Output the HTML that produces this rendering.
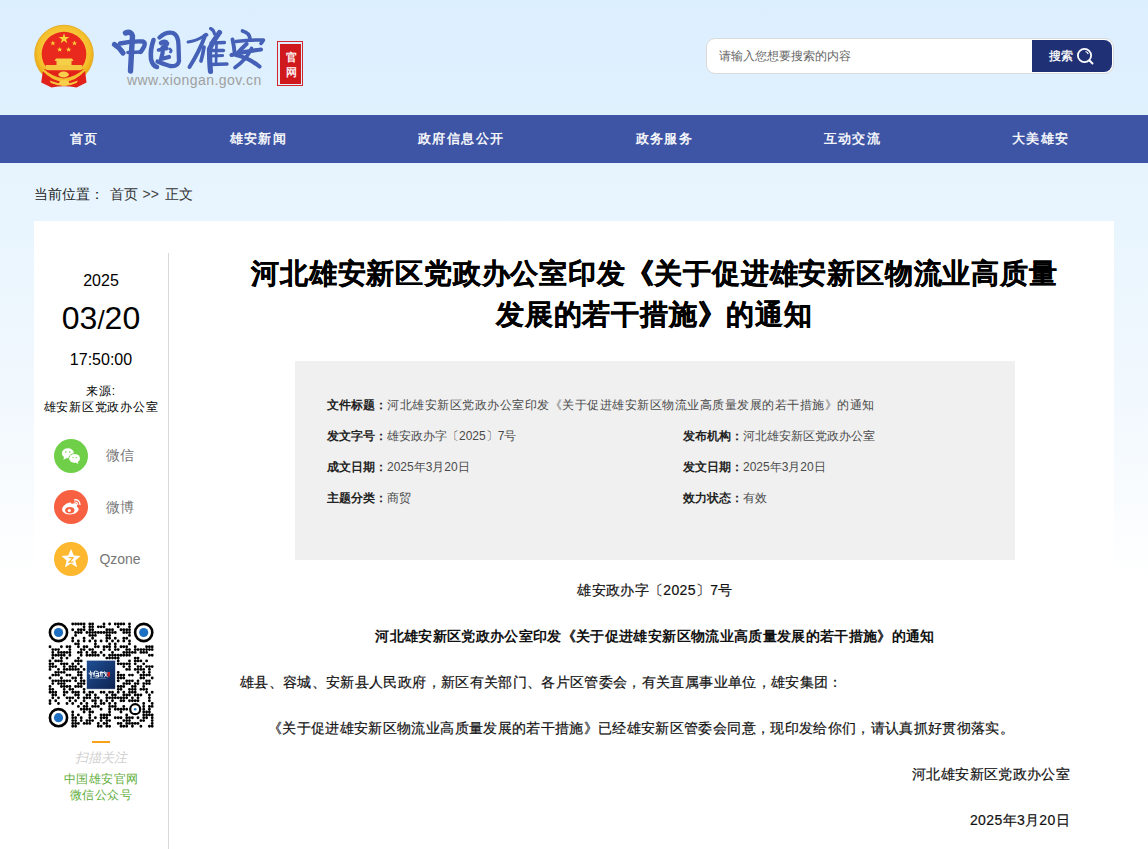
<!DOCTYPE html>
<html><head><meta charset="utf-8">
<style>
html,body{margin:0;padding:0;}
body{width:1148px;height:849px;overflow:hidden;position:relative;font-family:"Liberation Sans",sans-serif;color:#333;
background:linear-gradient(to bottom,#dcefff 0px,#e0f1fe 115px,#e6f4fe 165px,#f3f9fe 420px,#ffffff 580px,#ffffff 849px);}
.abs{position:absolute;white-space:nowrap;}
#nav{position:absolute;left:0;top:115px;width:1148px;height:48px;background:#3e55a6;}
#nav .it{position:absolute;top:0;line-height:48px;font-size:13px;color:#fff;letter-spacing:1.4px;-webkit-text-stroke:0.4px #fff;}
#bc{left:34px;top:186px;font-size:14px;line-height:16px;color:#222;}
#main{position:absolute;left:34px;top:221px;width:1080px;height:640px;background:#fff;}
#vline{position:absolute;left:168px;top:253px;width:1px;height:600px;background:#d9d9d9;}
.ctr{position:absolute;text-align:center;white-space:nowrap;}
.share{position:absolute;left:54px;width:34px;height:34px;border-radius:50%;}
.stxt{position:absolute;left:95px;width:50px;text-align:center;font-size:14px;line-height:16px;color:#777;}
#title{position:absolute;left:200px;width:909px;top:253px;text-align:center;font-size:28px;line-height:41px;font-weight:bold;color:#000;letter-spacing:0.8px;-webkit-text-stroke:0.3px #000;}
#info{position:absolute;left:295px;top:361px;width:720px;height:199px;background:#f0f0f0;}
.lab{position:absolute;font-size:12px;line-height:14px;color:#333;white-space:nowrap;}
.lab{color:#4a4a4a;} .lab b{color:#222;}
.p{position:absolute;left:240px;width:830px;font-size:14px;line-height:16px;color:#111;white-space:nowrap;letter-spacing:0.35px;-webkit-text-stroke:0.2px #111;}
</style></head>
<body>
<!-- header logo -->
<svg class="abs" style="left:30px;top:20px" width="70" height="72" viewBox="0 0 70 72">
  <defs>
    <radialGradient id="gold" cx="50%" cy="45%" r="55%"><stop offset="0" stop-color="#ffe07a"/><stop offset="0.8" stop-color="#f4bf2a"/><stop offset="1" stop-color="#e6a612"/></radialGradient>
  </defs>
  <circle cx="34" cy="34.5" r="29.3" fill="url(#gold)" stroke="#e3a51a" stroke-width="0.8"/>
  <circle cx="34" cy="34" r="22.3" fill="#e9291d"/>
  <polygon points="34,13.2 35.3,17 39.3,17 36.1,19.4 37.3,23.2 34,20.8 30.7,23.2 31.9,19.4 28.7,17 32.7,17" fill="#f8d23a"/>
  <polygon points="22.9,20.6 23.6,22.4 25.5,22.4 24,23.6 24.6,25.4 22.9,24.3 21.2,25.4 21.8,23.6 20.3,22.4 22.2,22.4" fill="#f8d23a"/>
  <polygon points="44.5,20.6 45.2,22.4 47.1,22.4 45.6,23.6 46.2,25.4 44.5,24.3 42.8,25.4 43.4,23.6 41.9,22.4 43.8,22.4" fill="#f8d23a"/>
  <polygon points="29.7,27 30.4,28.8 32.3,28.8 30.8,30 31.4,31.8 29.7,30.7 28,31.8 28.6,30 27.1,28.8 29,28.8" fill="#f8d23a"/>
  <polygon points="38.6,27 39.3,28.8 41.2,28.8 39.7,30 40.3,31.8 38.6,30.7 36.9,31.8 37.5,30 36,28.8 37.9,28.8" fill="#f8d23a"/>
  <path d="M26 38.5 L42 38.5 L43.5 41 L41.5 41 L41.5 45 L26.5 45 L26.5 41 L24.5 41 Z" fill="#f6cf48"/>
  <rect x="15.7" y="45" width="36.5" height="5.2" fill="#f4c640"/>
  <path d="M13.3 48.5 Q20 52 34 52 Q48 52 54.8 48.5 L56.5 62.5 L46.5 67.5 Q34 65 21.5 67.5 L11.2 62.5 Z" fill="#e2221a"/>
  <path d="M12.2 47.5 Q22 57 33.5 58.5 Q46 57 55.5 47.5 L55 51 Q46 61 34 62 Q22 61 12.6 51 Z" fill="#f4bf30"/>
  <path d="M19.5 60.5 Q27 63.5 34 63.5 Q41 63.5 48 60.5 L46.5 63 Q40 66 34 66 Q28 66 21 63 Z" fill="#f6c93c"/>
  <ellipse cx="33.6" cy="54.5" rx="5.2" ry="3" fill="#f7cf4a"/>
  <ellipse cx="34.2" cy="62.8" rx="5" ry="2.8" fill="#f7cf4a"/>
</svg>
<!--CALLI--><svg class="abs" style="left:108px;top:24px" width="162" height="52" viewBox="108 24 162 52" fill="none" stroke="#4560b7" stroke-linecap="round" stroke-linejoin="round">
  <!-- 中 -->
  <path d="M114.5 44.5 Q119 47 123 53" stroke-width="5.2"/>
  <path d="M120 43.5 Q132 41 143 41.5 Q146.5 43 143 48.5 Q141.5 51 140.5 52" stroke-width="4.4"/>
  <path d="M128 52.5 L141 52" stroke-width="3.6"/>
  <path d="M125.5 33 Q131 30.5 132.5 36 Q131.5 52 130.5 71" stroke-width="5.4"/>
  <!-- 国 -->
  <path d="M153.5 40 Q150 50 151 59 Q152.5 66 157 67" stroke-width="4.6"/>
  <path d="M159.5 37.5 Q166 31.5 173 33 Q178.5 35.5 178.5 45 L179 61 Q178 67 170 66 Q162 63.5 157.5 61.5" stroke-width="4.3"/>
  <path d="M161 43 Q165.5 40.5 167 43.5 Q165 47 162 49" stroke-width="4.6"/>
  <path d="M158.5 50 L167 48.5" stroke-width="3.6"/>
  <path d="M163 47 Q163 54 161 59 L169 57" stroke-width="4.2"/>
  <path d="M170 49 Q172 50.5 170.5 52" stroke-width="2.8"/>
  <!-- 雄 -->
  <path d="M188 42 Q196 41 203 36.5 Q206 33 207 35" stroke-width="2.9"/>
  <path d="M205 36 Q199 52 189.5 67" stroke-width="3.9"/>
  <path d="M204 47 Q203 54 201 61" stroke-width="3.7"/>
  <path d="M210.5 28.5 Q214 30 214.5 34" stroke-width="3.1"/>
  <path d="M219.5 32.5 Q213 41 209.5 49 Q209.5 62 210.5 71.5" stroke-width="5.2"/>
  <path d="M211 43 L224.5 42.5" stroke-width="3.3"/>
  <path d="M211 50.5 L223.5 50.5" stroke-width="3.3"/>
  <path d="M211 56 L222.5 55.5" stroke-width="3.1"/>
  <path d="M211 64.5 L227 64" stroke-width="3.5"/>
  <path d="M216.5 43 L216 64" stroke-width="2.7"/>
  <!-- 安 -->
  <path d="M242.5 31 Q249.5 33 250 38.5" stroke-width="3.7"/>
  <path d="M232.5 39.5 Q234 46 234.5 52" stroke-width="3.9"/>
  <path d="M236 41.5 Q250 39.5 263.5 40 Q262.5 42 261 43.5" stroke-width="3.5"/>
  <path d="M246.5 44 Q241 49 236 55 Q249 58 259.5 66.5" stroke-width="4.1"/>
  <path d="M231.5 55 Q246 51 261 49.5" stroke-width="4.1"/>
  <path d="M251.5 48.5 Q246 60 235 67.5" stroke-width="3.7"/>
</svg>
<!--/CALLI-->
<div class="abs" style="left:127px;top:72px;font-size:14px;line-height:17px;color:#a0a0a0;letter-spacing:0.45px;">www.xiongan.gov.cn</div>
<div class="abs" style="left:277px;top:41px;width:24px;height:43px;border:1px solid #d4262a;"></div>
<div class="abs" style="left:280px;top:44px;width:21px;height:40px;background:#d0191d;"></div>
<div class="abs" style="left:285.5px;top:50px;font-size:11px;line-height:15px;color:#fff;width:12px;white-space:normal;-webkit-text-stroke:0.3px #fff;">官网</div>

<!-- search -->
<div class="abs" style="left:706px;top:38px;width:406px;height:34px;border:1px solid #dadada;border-radius:9px;background:#fff;"></div>
<div class="abs" style="left:719px;top:48px;font-size:12px;line-height:16px;color:#666;">请输入您想要搜索的内容</div>
<div class="abs" style="left:1032px;top:40px;width:80px;height:32px;background:#1f3075;border-radius:0 8px 8px 0;"></div>
<div class="abs" style="left:1049px;top:48px;font-size:12px;line-height:16px;color:#fff;-webkit-text-stroke:0.3px #fff;">搜索</div>
<svg class="abs" style="left:1075px;top:46px" width="20" height="20" viewBox="0 0 20 20">
  <circle cx="9.5" cy="9.5" r="6.6" fill="none" stroke="#fff" stroke-width="1.8"/>
  <path d="M14.5 14.5 L17.5 17.5" stroke="#fff" stroke-width="2" stroke-linecap="round"/>
  <path d="M10.5 5.5 Q12.5 6 13.3 8" fill="none" stroke="#fff" stroke-width="1.2"/>
</svg>

<!-- nav -->
<div id="nav">
  <div class="it" style="left:70px">首页</div>
  <div class="it" style="left:229.5px">雄安新闻</div>
  <div class="it" style="left:418px">政府信息公开</div>
  <div class="it" style="left:635.5px">政务服务</div>
  <div class="it" style="left:823.5px">互动交流</div>
  <div class="it" style="left:1012px">大美雄安</div>
</div>

<div id="bc" class="abs">当前位置：</div><div class="abs" style="left:110px;top:186px;font-size:14px;line-height:16px;color:#333;">首页</div><div class="abs" style="left:142.5px;top:186px;font-size:14px;line-height:16px;color:#444;">&gt;&gt;</div><div class="abs" style="left:165px;top:186px;font-size:14px;line-height:16px;color:#333;">正文</div>

<div id="main"></div>
<div id="vline"></div>

<!-- sidebar -->
<div class="ctr" style="left:51px;width:100px;top:272px;font-size:16px;line-height:18px;color:#000;">2025</div>
<div class="ctr" style="left:51px;width:100px;top:300px;font-size:32px;line-height:36px;color:#000;">03<span style="font-size:26px">/</span>20</div>
<div class="ctr" style="left:51px;width:100px;top:351px;font-size:16px;line-height:18px;color:#000;">17:50:00</div>
<div class="ctr" style="left:41px;width:120px;top:384px;font-size:12px;line-height:15.6px;color:#000;letter-spacing:0.75px;">来源:<br>雄安新区党政办公室</div>

<svg class="abs" style="left:54px;top:439px" width="34" height="34" viewBox="0 0 34 34">
  <circle cx="17" cy="17" r="17" fill="#6fcf49"/>
  <ellipse cx="13.9" cy="14.3" rx="6" ry="5" fill="#fff"/>
  <path d="M10 17.5 L9.4 20.7 L13 18.9 Z" fill="#fff"/>
  <ellipse cx="20.6" cy="19.4" rx="6.2" ry="5.1" fill="#6fcf49"/>
  <ellipse cx="20.6" cy="19.4" rx="5.4" ry="4.4" fill="#fff"/>
  <path d="M23.4 22.5 L24.4 25 L21.4 23.5 Z" fill="#fff"/>
  <circle cx="11.8" cy="13" r="0.8" fill="#6fcf49"/>
  <circle cx="15.8" cy="13" r="0.8" fill="#6fcf49"/>
  <circle cx="19" cy="18.6" r="0.7" fill="#6fcf49"/>
  <circle cx="22.3" cy="18.6" r="0.7" fill="#6fcf49"/>
</svg>
<svg class="abs" style="left:54px;top:490px" width="34" height="34" viewBox="0 0 34 34">
  <circle cx="17" cy="17" r="17" fill="#f76142"/>
  <path d="M15.5 12.5 Q12 13 9.5 16 Q7 19.5 9 22 Q11.5 24.8 16.5 24.5 Q22 24 24 21 Q25.5 18.5 23.5 17.3 Q22.5 16.8 23 15.8 Q23.5 13.5 21.5 13.2 Q19.8 13 17.5 14 Q17.8 12.3 15.5 12.5 Z" fill="#fff"/>
  <ellipse cx="15.8" cy="20.3" rx="4.6" ry="3.2" fill="#f76142"/>
  <circle cx="15.3" cy="20.5" r="1.6" fill="#fff"/>
  <path d="M20.5 9.8 Q25.5 9.2 26 14.5" fill="none" stroke="#fff" stroke-width="1.3" stroke-linecap="round"/>
  <path d="M20.7 12 Q23.5 11.8 23.8 14.5" fill="none" stroke="#fff" stroke-width="1.1" stroke-linecap="round"/>
</svg>
<svg class="abs" style="left:54px;top:542px" width="34" height="34" viewBox="0 0 34 34">
  <circle cx="17" cy="17" r="17" fill="#fdb830"/>
  <polygon points="17,7 19.8,13.6 26.5,14.1 21.4,18.4 23,25.2 17,21.6 11,25.2 12.6,18.4 7.5,14.1 14.2,13.6" fill="#fff"/>
  <path d="M14.6 15.6 L19.4 15.6 L14.8 20.2 L19.6 20.2" fill="none" stroke="#fdb830" stroke-width="1.3" stroke-linejoin="round"/>
</svg>
<div class="stxt" style="top:447px;">微信</div>
<div class="stxt" style="top:499px;">微博</div>
<div class="stxt" style="top:551px;">Qzone</div>

<!-- QR placeholder -->
<!--QR--><svg class="abs" style="left:44px;top:618px" width="116" height="116" viewBox="44 618 116 116">
<path d="M72.7 624.0h0M75.6 624.0h0M78.4 624.0h0M81.2 624.0h0M84.1 624.0h0M89.8 624.0h0M92.6 624.0h0M104.0 624.0h0M109.6 624.0h0M115.3 624.0h0M118.2 624.0h0M121.0 624.0h0M123.8 624.0h0M129.5 624.0h0M84.1 626.8h0M89.8 626.8h0M92.6 626.8h0M98.3 626.8h0M101.1 626.8h0M104.0 626.8h0M118.2 626.8h0M129.5 626.8h0M72.7 629.7h0M78.4 629.7h0M81.2 629.7h0M84.1 629.7h0M89.8 629.7h0M92.6 629.7h0M106.8 629.7h0M109.6 629.7h0M112.5 629.7h0M121.0 629.7h0M123.8 629.7h0M126.7 629.7h0M129.5 629.7h0M75.6 632.5h0M78.4 632.5h0M81.2 632.5h0M86.9 632.5h0M89.8 632.5h0M92.6 632.5h0M95.4 632.5h0M98.3 632.5h0M101.1 632.5h0M104.0 632.5h0M106.8 632.5h0M109.6 632.5h0M112.5 632.5h0M115.3 632.5h0M123.8 632.5h0M126.7 632.5h0M129.5 632.5h0M75.6 635.4h0M89.8 635.4h0M92.6 635.4h0M95.4 635.4h0M106.8 635.4h0M109.6 635.4h0M129.5 635.4h0M72.7 638.2h0M84.1 638.2h0M92.6 638.2h0M106.8 638.2h0M109.6 638.2h0M115.3 638.2h0M123.8 638.2h0M126.7 638.2h0M72.7 641.0h0M78.4 641.0h0M84.1 641.0h0M89.8 641.0h0M95.4 641.0h0M101.1 641.0h0M106.8 641.0h0M112.5 641.0h0M118.2 641.0h0M123.8 641.0h0M129.5 641.0h0M75.6 643.9h0M78.4 643.9h0M95.4 643.9h0M109.6 643.9h0M115.3 643.9h0M129.5 643.9h0M50.0 646.7h0M61.4 646.7h0M67.0 646.7h0M69.9 646.7h0M78.4 646.7h0M84.1 646.7h0M86.9 646.7h0M95.4 646.7h0M98.3 646.7h0M104.0 646.7h0M106.8 646.7h0M109.6 646.7h0M115.3 646.7h0M121.0 646.7h0M123.8 646.7h0M126.7 646.7h0M135.2 646.7h0M146.6 646.7h0M149.4 646.7h0M152.2 646.7h0M52.8 649.6h0M55.7 649.6h0M58.5 649.6h0M69.9 649.6h0M81.2 649.6h0M84.1 649.6h0M89.8 649.6h0M92.6 649.6h0M104.0 649.6h0M109.6 649.6h0M115.3 649.6h0M118.2 649.6h0M126.7 649.6h0M129.5 649.6h0M135.2 649.6h0M138.0 649.6h0M140.9 649.6h0M143.7 649.6h0M146.6 649.6h0M149.4 649.6h0M152.2 649.6h0M52.8 652.4h0M58.5 652.4h0M61.4 652.4h0M64.2 652.4h0M67.0 652.4h0M69.9 652.4h0M78.4 652.4h0M81.2 652.4h0M86.9 652.4h0M92.6 652.4h0M95.4 652.4h0M101.1 652.4h0M112.5 652.4h0M123.8 652.4h0M126.7 652.4h0M129.5 652.4h0M132.4 652.4h0M135.2 652.4h0M140.9 652.4h0M143.7 652.4h0M146.6 652.4h0M52.8 655.2h0M55.7 655.2h0M58.5 655.2h0M61.4 655.2h0M64.2 655.2h0M69.9 655.2h0M81.2 655.2h0M86.9 655.2h0M89.8 655.2h0M92.6 655.2h0M95.4 655.2h0M98.3 655.2h0M104.0 655.2h0M109.6 655.2h0M112.5 655.2h0M115.3 655.2h0M118.2 655.2h0M121.0 655.2h0M123.8 655.2h0M126.7 655.2h0M129.5 655.2h0M149.4 655.2h0M152.2 655.2h0M52.8 658.1h0M61.4 658.1h0M67.0 658.1h0M78.4 658.1h0M106.8 658.1h0M109.6 658.1h0M112.5 658.1h0M115.3 658.1h0M118.2 658.1h0M135.2 658.1h0M138.0 658.1h0M50.0 660.9h0M55.7 660.9h0M58.5 660.9h0M61.4 660.9h0M75.6 660.9h0M78.4 660.9h0M81.2 660.9h0M118.2 660.9h0M129.5 660.9h0M135.2 660.9h0M138.0 660.9h0M140.9 660.9h0M146.6 660.9h0M50.0 663.8h0M52.8 663.8h0M61.4 663.8h0M64.2 663.8h0M67.0 663.8h0M72.7 663.8h0M78.4 663.8h0M118.2 663.8h0M121.0 663.8h0M123.8 663.8h0M126.7 663.8h0M129.5 663.8h0M135.2 663.8h0M143.7 663.8h0M50.0 666.6h0M52.8 666.6h0M55.7 666.6h0M64.2 666.6h0M69.9 666.6h0M72.7 666.6h0M75.6 666.6h0M81.2 666.6h0M123.8 666.6h0M129.5 666.6h0M138.0 666.6h0M140.9 666.6h0M146.6 666.6h0M149.4 666.6h0M152.2 666.6h0M50.0 669.4h0M58.5 669.4h0M64.2 669.4h0M67.0 669.4h0M69.9 669.4h0M72.7 669.4h0M75.6 669.4h0M78.4 669.4h0M84.1 669.4h0M126.7 669.4h0M129.5 669.4h0M135.2 669.4h0M138.0 669.4h0M140.9 669.4h0M143.7 669.4h0M149.4 669.4h0M55.7 672.3h0M58.5 672.3h0M61.4 672.3h0M64.2 672.3h0M78.4 672.3h0M81.2 672.3h0M118.2 672.3h0M138.0 672.3h0M143.7 672.3h0M149.4 672.3h0M52.8 675.1h0M55.7 675.1h0M58.5 675.1h0M67.0 675.1h0M69.9 675.1h0M78.4 675.1h0M81.2 675.1h0M118.2 675.1h0M121.0 675.1h0M123.8 675.1h0M129.5 675.1h0M132.4 675.1h0M140.9 675.1h0M143.7 675.1h0M146.6 675.1h0M149.4 675.1h0M50.0 678.0h0M61.4 678.0h0M72.7 678.0h0M75.6 678.0h0M81.2 678.0h0M118.2 678.0h0M121.0 678.0h0M123.8 678.0h0M140.9 678.0h0M143.7 678.0h0M152.2 678.0h0M52.8 680.8h0M55.7 680.8h0M58.5 680.8h0M61.4 680.8h0M64.2 680.8h0M67.0 680.8h0M69.9 680.8h0M75.6 680.8h0M81.2 680.8h0M84.1 680.8h0M118.2 680.8h0M126.7 680.8h0M129.5 680.8h0M132.4 680.8h0M138.0 680.8h0M146.6 680.8h0M149.4 680.8h0M52.8 683.6h0M58.5 683.6h0M61.4 683.6h0M64.2 683.6h0M78.4 683.6h0M81.2 683.6h0M84.1 683.6h0M123.8 683.6h0M126.7 683.6h0M129.5 683.6h0M135.2 683.6h0M138.0 683.6h0M143.7 683.6h0M146.6 683.6h0M149.4 683.6h0M50.0 686.5h0M61.4 686.5h0M64.2 686.5h0M67.0 686.5h0M69.9 686.5h0M75.6 686.5h0M78.4 686.5h0M81.2 686.5h0M118.2 686.5h0M121.0 686.5h0M123.8 686.5h0M132.4 686.5h0M135.2 686.5h0M143.7 686.5h0M50.0 689.3h0M52.8 689.3h0M64.2 689.3h0M69.9 689.3h0M72.7 689.3h0M84.1 689.3h0M118.2 689.3h0M121.0 689.3h0M129.5 689.3h0M132.4 689.3h0M135.2 689.3h0M140.9 689.3h0M143.7 689.3h0M146.6 689.3h0M50.0 692.2h0M52.8 692.2h0M55.7 692.2h0M64.2 692.2h0M67.0 692.2h0M72.7 692.2h0M75.6 692.2h0M78.4 692.2h0M84.1 692.2h0M89.8 692.2h0M92.6 692.2h0M101.1 692.2h0M104.0 692.2h0M109.6 692.2h0M112.5 692.2h0M118.2 692.2h0M123.8 692.2h0M129.5 692.2h0M132.4 692.2h0M135.2 692.2h0M146.6 692.2h0M152.2 692.2h0M52.8 695.0h0M55.7 695.0h0M64.2 695.0h0M75.6 695.0h0M78.4 695.0h0M86.9 695.0h0M89.8 695.0h0M95.4 695.0h0M106.8 695.0h0M112.5 695.0h0M115.3 695.0h0M123.8 695.0h0M126.7 695.0h0M129.5 695.0h0M135.2 695.0h0M138.0 695.0h0M140.9 695.0h0M149.4 695.0h0M52.8 697.8h0M58.5 697.8h0M67.0 697.8h0M69.9 697.8h0M72.7 697.8h0M78.4 697.8h0M84.1 697.8h0M86.9 697.8h0M89.8 697.8h0M95.4 697.8h0M98.3 697.8h0M106.8 697.8h0M109.6 697.8h0M112.5 697.8h0M115.3 697.8h0M118.2 697.8h0M121.0 697.8h0M123.8 697.8h0M126.7 697.8h0M132.4 697.8h0M138.0 697.8h0M149.4 697.8h0M50.0 700.7h0M55.7 700.7h0M69.9 700.7h0M75.6 700.7h0M84.1 700.7h0M92.6 700.7h0M95.4 700.7h0M101.1 700.7h0M106.8 700.7h0M112.5 700.7h0M121.0 700.7h0M123.8 700.7h0M129.5 700.7h0M132.4 700.7h0M135.2 700.7h0M138.0 700.7h0M149.4 700.7h0M50.0 703.5h0M58.5 703.5h0M67.0 703.5h0M72.7 703.5h0M81.2 703.5h0M86.9 703.5h0M95.4 703.5h0M101.1 703.5h0M104.0 703.5h0M109.6 703.5h0M115.3 703.5h0M143.7 703.5h0M152.2 703.5h0M78.4 706.4h0M84.1 706.4h0M86.9 706.4h0M92.6 706.4h0M95.4 706.4h0M98.3 706.4h0M109.6 706.4h0M112.5 706.4h0M115.3 706.4h0M123.8 706.4h0M143.7 706.4h0M149.4 706.4h0M152.2 706.4h0M81.2 709.2h0M84.1 709.2h0M86.9 709.2h0M89.8 709.2h0M101.1 709.2h0M109.6 709.2h0M115.3 709.2h0M118.2 709.2h0M121.0 709.2h0M123.8 709.2h0M126.7 709.2h0M143.7 709.2h0M149.4 709.2h0M72.7 712.0h0M84.1 712.0h0M89.8 712.0h0M92.6 712.0h0M109.6 712.0h0M121.0 712.0h0M143.7 712.0h0M146.6 712.0h0M149.4 712.0h0M72.7 714.9h0M78.4 714.9h0M89.8 714.9h0M101.1 714.9h0M104.0 714.9h0M106.8 714.9h0M109.6 714.9h0M126.7 714.9h0M143.7 714.9h0M146.6 714.9h0M149.4 714.9h0M152.2 714.9h0M72.7 717.7h0M75.6 717.7h0M81.2 717.7h0M89.8 717.7h0M95.4 717.7h0M101.1 717.7h0M104.0 717.7h0M106.8 717.7h0M115.3 717.7h0M118.2 717.7h0M121.0 717.7h0M126.7 717.7h0M129.5 717.7h0M132.4 717.7h0M138.0 717.7h0M143.7 717.7h0M146.6 717.7h0M152.2 717.7h0M72.7 720.6h0M75.6 720.6h0M81.2 720.6h0M86.9 720.6h0M89.8 720.6h0M92.6 720.6h0M101.1 720.6h0M106.8 720.6h0M109.6 720.6h0M123.8 720.6h0M126.7 720.6h0M129.5 720.6h0M140.9 720.6h0M143.7 720.6h0M152.2 720.6h0M72.7 723.4h0M75.6 723.4h0M78.4 723.4h0M84.1 723.4h0M86.9 723.4h0M89.8 723.4h0M98.3 723.4h0M104.0 723.4h0M106.8 723.4h0M118.2 723.4h0M121.0 723.4h0M126.7 723.4h0M129.5 723.4h0M132.4 723.4h0M135.2 723.4h0M138.0 723.4h0M152.2 723.4h0M72.7 726.2h0M75.6 726.2h0M98.3 726.2h0M101.1 726.2h0M106.8 726.2h0M109.6 726.2h0M121.0 726.2h0M123.8 726.2h0M126.7 726.2h0M132.4 726.2h0M140.9 726.2h0M149.4 726.2h0M152.2 726.2h0" stroke="#000" stroke-width="2.85" stroke-linecap="round" fill="none"/>
<circle cx="58.5" cy="632.5" r="8.6" fill="none" stroke="#000" stroke-width="2.6"/><circle cx="58.5" cy="632.5" r="4.6" fill="#1d6fc2"/>
<circle cx="143.7" cy="632.5" r="8.6" fill="none" stroke="#000" stroke-width="2.6"/><circle cx="143.7" cy="632.5" r="4.6" fill="#1d6fc2"/>
<circle cx="58.5" cy="717.7" r="8.6" fill="none" stroke="#000" stroke-width="2.6"/><circle cx="58.5" cy="717.7" r="4.6" fill="#1d6fc2"/>
<circle cx="135.2" cy="709.2" r="5" fill="none" stroke="#000" stroke-width="2.2"/><circle cx="135.2" cy="709.2" r="1.3" fill="#1d6fc2"/>
<defs><linearGradient id="qlg" x1="0" y1="0" x2="1" y2="1"><stop offset="0" stop-color="#1f4f95"/><stop offset="1" stop-color="#0d2350"/></linearGradient></defs>
<rect x="86.5" y="660.3" width="29" height="29" rx="1" fill="url(#qlg)" stroke="#fff" stroke-width="0.6"/>
<path d="M89 673.5 l2.5 1.5 M90.5 671 q1 2 0.5 7 M89.8 673 h4 l-0.5 1.5 M94.5 671.5 l-0.5 5 M95.5 671 q3 0 3 2 v4 h-3 M96 673.5 h2 M96 675.5 h2 M100 672.5 h3.5 M101 671.5 l-1 5 M102 672 v5 M104.5 671.5 q1 1 0.5 2 M104 673 h3.5 M105 674 l2.5 3 M106.5 674 l-2 3" stroke="#fff" stroke-width="0.9" fill="none" stroke-linecap="round"/>
<rect x="107.5" y="672" width="2.5" height="4.5" fill="#c8232a"/>
<path d="M89.5 678.5 h17" stroke="#9fb3d6" stroke-width="0.4"/>
</svg><!--/QR-->
<div class="abs" style="left:92px;top:741px;width:18px;height:2px;background:#f7a21a;"></div>
<div class="ctr" style="left:51px;width:100px;top:750px;font-size:13px;line-height:16px;color:#cfcfcf;font-style:italic;">扫描关注</div>
<div class="ctr" style="left:51px;width:100px;top:771px;font-size:12px;line-height:16px;color:#5fae3a;letter-spacing:0.5px;">中国雄安官网<br>微信公众号</div>

<!-- article -->
<div id="title">河北雄安新区党政办公室印发《关于促进雄安新区物流业高质量<br>发展的若干措施》的通知</div>
<div id="info"></div>
<div class="lab" style="left:327px;top:398px;"><b>文件标题：</b><span style="letter-spacing:0.5px">河北雄安新区党政办公室印发《关于促进雄安新区物流业高质量发展的若干措施》的通知</span></div>
<div class="lab" style="left:327px;top:429px;"><b>发文字号：</b>雄安政办字〔2025〕7号</div>
<div class="lab" style="left:683px;top:429px;"><b>发布机构：</b>河北雄安新区党政办公室</div>
<div class="lab" style="left:327px;top:460px;"><b>成文日期：</b>2025年3月20日</div>
<div class="lab" style="left:683px;top:460px;"><b>发文日期：</b>2025年3月20日</div>
<div class="lab" style="left:327px;top:491px;"><b>主题分类：</b>商贸</div>
<div class="lab" style="left:683px;top:491px;"><b>效力状态：</b>有效</div>

<div class="p" style="top:582px;text-align:center;">雄安政办字〔2025〕7号</div>
<div class="p" style="top:628px;text-align:center;font-weight:bold;-webkit-text-stroke:0;">河北雄安新区党政办公室印发《关于促进雄安新区物流业高质量发展的若干措施》的通知</div>
<div class="p" style="top:674px;">雄县、容城、安新县人民政府，新区有关部门、各片区管委会，有关直属事业单位，雄安集团：</div>
<div class="p" style="top:720px;text-indent:2em;">《关于促进雄安新区物流业高质量发展的若干措施》已经雄安新区管委会同意，现印发给你们，请认真抓好贯彻落实。</div>
<div class="p" style="top:766px;text-align:right;">河北雄安新区党政办公室</div>
<div class="p" style="top:812px;text-align:right;">2025年3月20日</div>
</body></html>
